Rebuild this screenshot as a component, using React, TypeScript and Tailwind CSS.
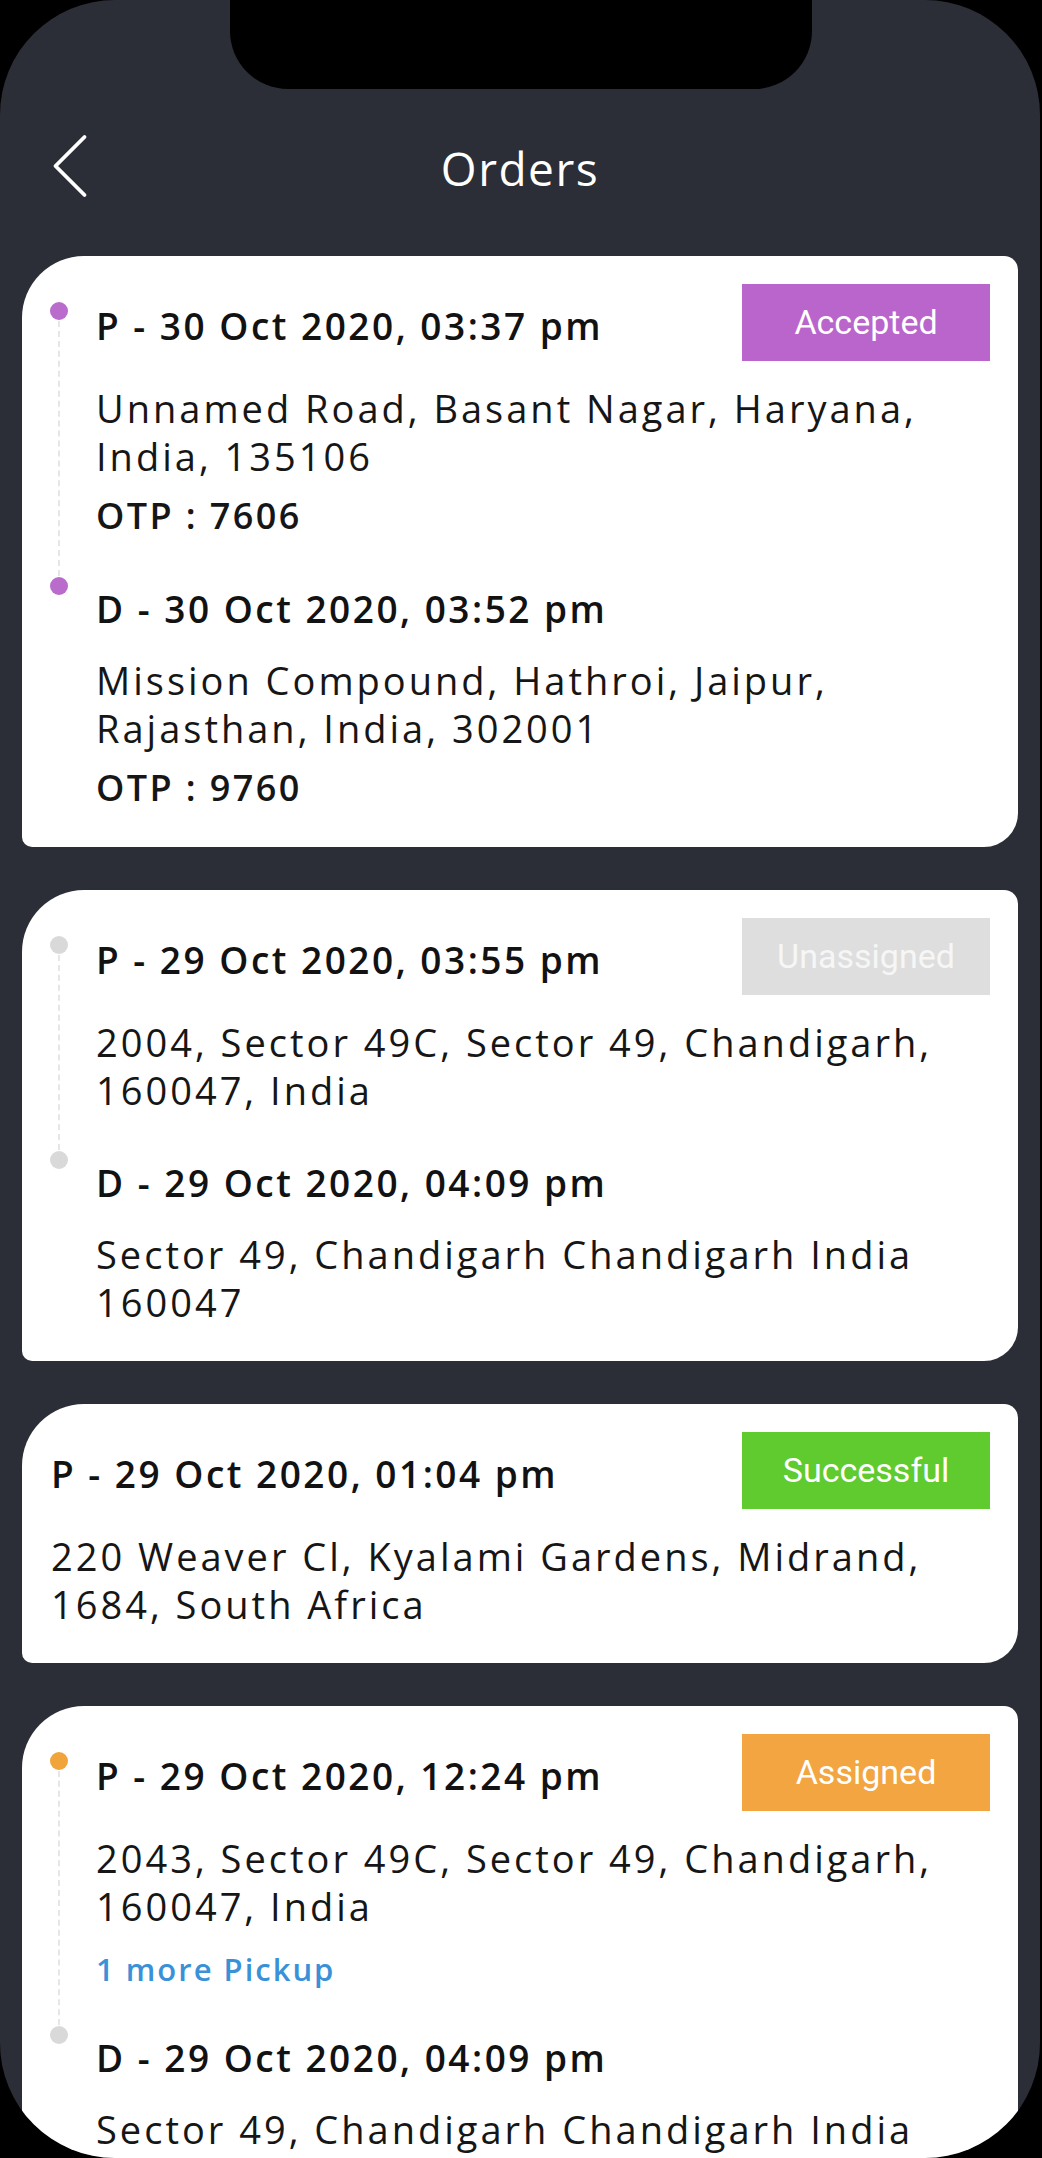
import { ChevronLeft } from 'lucide-react';

type Stop = {
  time: string;
  address: string[];
  otp?: string;
  more?: string;
};

type Order = {
  id: number;
  status: string;
  badge: string;
  dot?: string;
  dropDot?: string;
  pickup: Stop;
  drop?: Stop;
};

const orders: Order[] = [
  {
    id: 1,
    status: 'Accepted',
    badge: 'bg-[#b965cb] text-white',
    dot: 'bg-[#b96ccb]',
    dropDot: 'bg-[#b96ccb]',
    pickup: {
      time: 'P - 30 Oct 2020, 03:37 pm',
      address: ['Unnamed Road, Basant Nagar, Haryana,', 'India, 135106'],
      otp: 'OTP : 7606',
    },
    drop: {
      time: 'D - 30 Oct 2020, 03:52 pm',
      address: ['Mission Compound, Hathroi, Jaipur,', 'Rajasthan, India, 302001'],
      otp: 'OTP : 9760',
    },
  },
  {
    id: 2,
    status: 'Unassigned',
    badge: 'bg-[#dedede] text-[#f6f6f6]',
    dot: 'bg-[#d9d9d9]',
    dropDot: 'bg-[#d9d9d9]',
    pickup: {
      time: 'P - 29 Oct 2020, 03:55 pm',
      address: ['2004, Sector 49C, Sector 49, Chandigarh,', '160047, India'],
    },
    drop: {
      time: 'D - 29 Oct 2020, 04:09 pm',
      address: ['Sector 49, Chandigarh Chandigarh India', '160047'],
    },
  },
  {
    id: 3,
    status: 'Successful',
    badge: 'bg-[#5fcb2f] text-white',
    pickup: {
      time: 'P - 29 Oct 2020, 01:04 pm',
      address: ['220 Weaver Cl, Kyalami Gardens, Midrand,', '1684, South Africa'],
    },
  },
  {
    id: 4,
    status: 'Assigned',
    badge: 'bg-[#f2a541] text-white',
    dot: 'bg-[#f2a43c]',
    dropDot: 'bg-[#d9d9d9]',
    pickup: {
      time: 'P - 29 Oct 2020, 12:24 pm',
      address: ['2043, Sector 49C, Sector 49, Chandigarh,', '160047, India'],
      more: '1 more Pickup',
    },
    drop: {
      time: 'D - 29 Oct 2020, 04:09 pm',
      address: ['Sector 49, Chandigarh Chandigarh India', '160047'],
    },
  },
];

const bodyFont = "font-['Open_Sans',sans-serif]";

function StopDetails({ stop }: { stop: Stop }) {
  return (
    <>
      <div className="mt-[23px] text-[38px] leading-[48px] tracking-[3px] whitespace-nowrap text-[#161616]">
        {stop.address.map((line) => (
          <div key={line}>{line}</div>
        ))}
      </div>
      {stop.otp && (
        <div className="mt-[12px] text-[36px] leading-[48px] font-semibold tracking-[2.4px] text-[#161616]">
          {stop.otp}
        </div>
      )}
      {stop.more && (
        <div className="mt-[19px] text-[31px] leading-[40px] font-semibold tracking-[2px] text-[#3a91d8]">
          {stop.more}
        </div>
      )}
    </>
  );
}

function OrderCard({ order }: { order: Order }) {
  const hasTimeline = !!order.dot;

  return (
    <div
      className={`bg-white rounded-tl-[62px] rounded-tr-[14px] rounded-br-[34px] rounded-bl-[10px] pt-[28px] pb-[35px] pr-[28px] ${
        hasTimeline ? 'pl-[74px]' : 'pl-[29px]'
      }`}
    >
      <div className={`relative ${order.drop ? 'mb-[45px]' : ''}`}>
        {hasTimeline && (
          <>
            <span className="absolute left-[-38px] top-[27px] bottom-[-46px] border-l-2 border-dashed border-[#e6e6e6]" />
            <span className={`absolute left-[-46px] top-[18px] w-[18px] h-[18px] rounded-full ${order.dot}`} />
          </>
        )}
        <div className="flex items-center justify-between h-[77px]">
          <div className="pt-[6px] text-[37px] font-semibold tracking-[2.5px] whitespace-nowrap text-[#121212]">
            {order.pickup.time}
          </div>
          <div
            className={`w-[248px] h-[77px] flex items-center justify-center text-[34px] font-['Roboto',sans-serif] ${order.badge}`}
          >
            {order.status}
          </div>
        </div>
        <StopDetails stop={order.pickup} />
      </div>

      {order.drop && (
        <div className="relative">
          <span className={`absolute left-[-46px] top-[-8px] w-[18px] h-[18px] rounded-full ${order.dropDot}`} />
          <div className="text-[37px] leading-[48px] font-semibold tracking-[2.5px] whitespace-nowrap text-[#121212]">
            {order.drop.time}
          </div>
          <StopDetails stop={order.drop} />
        </div>
      )}
    </div>
  );
}

export default function App() {
  return (
    <div className={`w-[1042px] h-[2158px] bg-black overflow-hidden ${bodyFont}`}>
      <div className="relative w-[1040px] h-[2158px] bg-[#2b2e37] rounded-[115px] overflow-hidden">
        <div className="absolute left-[230px] top-0 w-[582px] h-[89px] bg-black rounded-b-[58px]" />

        <div className="relative mt-[118px] h-[100px] flex items-center justify-center">
          <ChevronLeft className="absolute left-[12px] top-[-10px] w-[116px] h-[116px] text-white" strokeWidth={0.8} />
          <h1 className="text-[46px] font-medium tracking-[1.5px] text-white">Orders</h1>
        </div>

        <div className="mt-[38px] px-[22px] flex flex-col gap-[43px]">
          {orders.map((order) => (
            <OrderCard key={order.id} order={order} />
          ))}
        </div>
      </div>
    </div>
  );
}
